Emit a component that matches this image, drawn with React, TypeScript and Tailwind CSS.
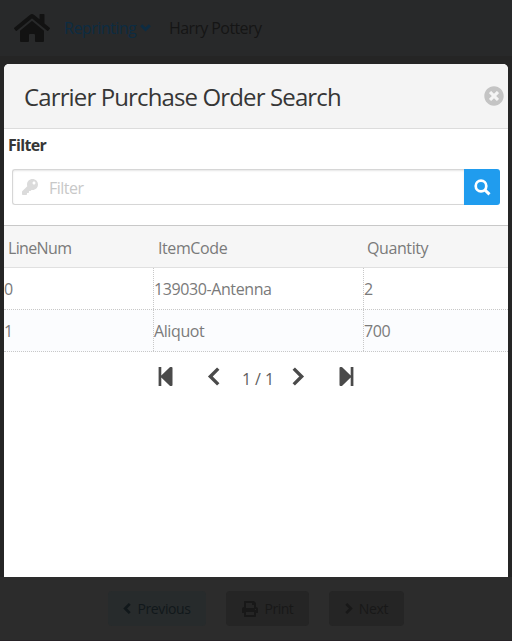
import React from "react";
import { FaHome, FaKey, FaTimesCircle, FaPrint } from "react-icons/fa";

const rows = [
  ["0", "139030-Antenna", "2"],
  ["1", "Aliquot", "700"],
];

function Chevron({ className, d, width = 3 }: { className: string; d: string; width?: number }) {
  return (
    <svg className={className} viewBox="0 0 12 18" fill="none" stroke="currentColor" strokeWidth={width}>
      <path d={d} />
    </svg>
  );
}

const LEFT = "M10.5 1.5L3 9l7.5 7.5";
const RIGHT = "M1.5 1.5L9 9l-7.5 7.5";

function TopBar() {
  return (
    <header className="flex h-[56px] items-center bg-[#28292a] pl-[14px] text-[16px] text-[#151515]">
      <FaHome className="h-[36px] w-[36px] text-[#121212]" />
      <span className="ml-[14px] w-[75px] whitespace-nowrap tracking-[-0.5px] text-[#0d2c42]">Reprinting</span>
      <svg className="ml-[1px] h-[8px] w-[11px] text-[#0d2c42]" viewBox="0 0 11 8" fill="none" stroke="currentColor" strokeWidth="3">
        <path d="M1.2 1.2l4.3 4.3 4.3-4.3" />
      </svg>
      <span className="ml-[18px] whitespace-nowrap tracking-[-0.6px]">Harry Pottery</span>
    </header>
  );
}

function Footer() {
  return (
    <footer className="flex h-[64px] justify-center gap-[20px] border-b border-[#262226] bg-[#2c2c2c] pt-[14px] text-[14px] text-[#181818]">
      <div className="flex h-[35px] w-[98px] items-center justify-center gap-[6px] rounded-[4px] bg-[#272b2c] tracking-[-0.4px] text-[#11181b]">
        <Chevron className="h-[11px] w-[8px]" d={LEFT} width={4.4} />Previous
      </div>
      <div className="flex h-[35px] w-[83px] items-center justify-center gap-[7px] rounded-[4px] bg-[#252525] tracking-[-0.5px]">
        <FaPrint className="h-[16px] w-[16px]" />Print
      </div>
      <div className="flex h-[35px] w-[75px] items-center justify-center gap-[6px] rounded-[4px] bg-[#252525] tracking-[-0.3px]">
        <Chevron className="h-[11px] w-[8px]" d={RIGHT} width={4.4} />Next
      </div>
    </footer>
  );
}

function SearchDialog() {
  return (
    <section className="absolute left-[4px] top-[64px] flex h-[513px] w-[504px] flex-col rounded-t-[5px] bg-white text-[16px] text-[#7a7a7a]">
      <div className="flex h-[65px] items-center justify-between rounded-t-[5px] border-b border-[#dcdcdc] bg-[#f4f4f4] pl-[20px] pr-[4px] pt-[2px]">
        <h1 className="whitespace-nowrap text-[24px] leading-8 tracking-[-0.87px] text-[#363636]">Carrier Purchase Order Search</h1>
        <FaTimesCircle className="mb-[2px] h-[20px] w-[20px] text-[#c4c4c4]" />
      </div>
      <div className="h-[40px] pl-[4px] pt-[4px] text-[16px] font-bold leading-6 tracking-[-0.7px] text-[#363636]">Filter</div>
      <div className="mx-[8px] flex h-[36px]">
        <div className="flex flex-1 items-center rounded-l-[3px] border border-r-0 border-[#d6d6d6] pl-[9px] shadow-[inset_0_1px_2px_#e6e6e6]">
          <FaKey className="h-[16px] w-[16px] text-[#dbdbdb]" />
          <span className="ml-[11px] pt-[2px] tracking-[-0.5px] text-[#c8c8c8]">Filter</span>
        </div>
        <button className="flex w-[36px] items-center justify-center rounded-r-[3px] bg-[#209cee] text-white">
          <svg className="h-[17px] w-[17px]" viewBox="0 0 17 17" fill="none" stroke="currentColor">
            <circle cx="7" cy="7" r="5.3" strokeWidth="2.7" />
            <path d="M10.8 10.8l4.7 4.5" strokeWidth="3" />
          </svg>
        </button>
      </div>
      <div className="mt-[20px] grid h-[43px] grid-cols-[149px_210px_145px] items-center border-b border-t border-[#e0e0e0] border-t-[#c8c8c8] bg-[#f6f6f6] pt-[2px] tracking-[-0.4px]">
        <span className="pl-[4px] tracking-[-0.65px]">LineNum</span>
        <span className="pl-[5px]">ItemCode</span>
        <span className="pl-[4px]">Quantity</span>
      </div>
      {rows.map((row, i) => (
        <div key={row[0]} className={`grid h-[42px] grid-cols-[149px_210px_145px] grid-rows-[41px] border-b border-dotted border-[#c8c8c8] leading-[43px] tracking-[-0.4px] ${i % 2 ? "bg-[#fbfcfe]" : "bg-white"}`}>
          <span>{row[0]}</span>
          <span className="border-l border-dotted border-[#c8c8c8]">{row[1]}</span>
          <span className="border-l border-dotted border-[#c8c8c8]">{row[2]}</span>
        </div>
      ))}
      <div className="flex h-[48px] items-center pl-[154px] text-[#4a4a4a]">
        <svg className="h-[19px] w-[15px]" viewBox="0 0 15 18" preserveAspectRatio="none" fill="currentColor">
          <path d="M.6 0h2.7v8L11.8.2Q12 0 12.5 0h1q1 0 1 1v16q0 1-1 1h-1q-.5 0-.7-.2L3.3 10V18H.6z" />
        </svg>
        <Chevron className="ml-[34px] h-[19px] w-[13px]" d={LEFT} width={3.2} />
        <span className="ml-[22px] w-[33px] whitespace-nowrap pt-[5px] text-[16px] tracking-[-0.1px] text-[#606060]">1 / 1</span>
        <Chevron className="ml-[17px] h-[19px] w-[13px]" d={RIGHT} width={3.2} />
        <svg className="ml-[34px] h-[19px] w-[15px]" viewBox="0 0 15 18" preserveAspectRatio="none" fill="currentColor">
          <path d="M14.4 0h-2.7v8L3.2.2Q3 0 2.5 0h-1q-1 0-1 1v16q0 1 1 1h1q.5 0 .7-.2L11.7 10V18h2.7z" />
        </svg>
      </div>
    </section>
  );
}

export default function App() {
  return (
    <main className="relative flex h-[641px] w-[512px] flex-col overflow-hidden bg-[#2c2c2c] font-['Open_Sans','Noto_Sans',sans-serif]">
      <TopBar />
      <div className="flex-1 bg-[#252525]" />
      <Footer />
      <SearchDialog />
    </main>
  );
}
